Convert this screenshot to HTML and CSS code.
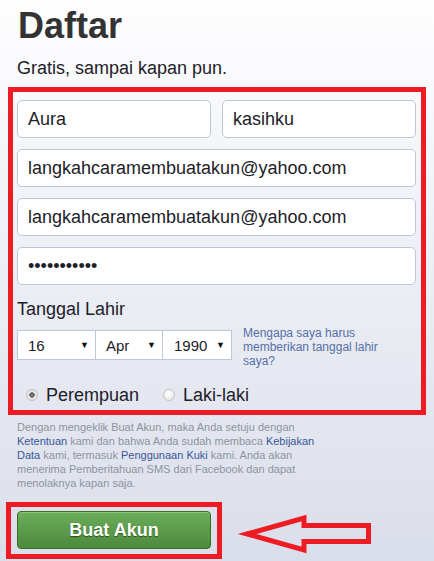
FILE: index.html
```html
<!DOCTYPE html>
<html lang="id">
<head>
    <meta charset="UTF-8">
    <meta name="viewport" content="width=device-width, initial-scale=1.0">
    <title>Daftar</title>
    <link rel="stylesheet" href="styles.css">
</head>
<body>
    <div class="page">
        <h1 class="title">Daftar</h1>
        <div class="subtitle">Gratis, sampai kapan pun.</div>

        <!-- Signup form -->
        <form class="form-box" id="signup-form">
            <div class="name-row">
                <input type="text" class="field" value="Aura">
                <input type="text" class="field" value="kasihku">
            </div>
            <input type="text" class="field" value="langkahcaramembuatakun@yahoo.com">
            <input type="text" class="field" value="langkahcaramembuatakun@yahoo.com">
            <input type="password" class="field" value="rahasia1234">

            <div class="birth-label">Tanggal Lahir</div>
            <div class="birth-row">
                <div class="select day"><span>16</span><span class="caret">&#9660;</span></div>
                <div class="select month"><span>Apr</span><span class="caret">&#9660;</span></div>
                <div class="select year"><span>1990</span><span class="caret">&#9660;</span></div>
                <a href="#" class="why-link">Mengapa saya harus memberikan tanggal lahir saya?</a>
            </div>

            <div class="gender-row">
                <label class="gender"><span class="radio checked"></span>Perempuan</label>
                <label class="gender"><span class="radio"></span>Laki-laki</label>
            </div>
        </form>

        <p class="terms">
            Dengan mengeklik Buat Akun, maka Anda setuju dengan<br>
            <a href="#">Ketentuan</a> kami dan bahwa Anda sudah membaca <a href="#">Kebijakan</a><br>
            <a href="#">Data</a> kami, termasuk <a href="#">Penggunaan Kuki</a> kami. Anda akan<br>
            menerima Pemberitahuan SMS dari Facebook dan dapat<br>
            menolaknya kapan saja.
        </p>

        <div class="signup-row">
            <div class="button-box">
                <button type="button" class="signup-btn">Buat Akun</button>
            </div>
            <svg class="arrow" width="142" height="48" viewBox="0 0 142 48">
                <polygon points="13,24 70,8 70,15.5 134.5,15.5 134.5,31.5 70,31.5 70,40"
                         fill="none" stroke="#ed1c24" stroke-width="5"/>
            </svg>
        </div>
    </div>
</body>
</html>
```

FILE: styles.css
```css
body {
    margin: 0;
    min-height: 561px;
    font-family: "Liberation Sans", Arial, sans-serif;
    background: linear-gradient(to bottom, #fefeff 0%, #dadeea 100%);
    color: #1d2129;
}
.page {
    padding: 0 8px;
}
.title {
    margin: 0;
    padding: 5px 0 0 10px;
    font-size: 36px;
    line-height: 42px;
    font-weight: bold;
    color: #333;
}
.subtitle {
    margin-top: 10px;
    padding-left: 9px;
    font-size: 18px;
    line-height: 22px;
}
.form-box {
    margin: 8px 0 0;
    border: 5px solid #ed1c24;
    padding: 8px 5px 4px 4px;
}
.name-row {
    display: flex;
    gap: 11px;
}
.field {
    display: block;
    box-sizing: border-box;
    width: 100%;
    height: 38px;
    margin: 0 0 11px;
    padding: 0 10px;
    border: 1px solid #bdc7d8;
    border-radius: 5px;
    background-color: #fff;
    font-family: "Liberation Sans", Arial, sans-serif;
    font-size: 18px;
    color: #1d2129;
}
.name-row .field {
    flex: 1;
}
.form-box > .field:last-of-type {
    margin-bottom: 0;
}
.birth-label {
    margin-top: 13px;
    font-size: 18px;
    line-height: 22px;
}
.birth-row {
    display: flex;
    align-items: flex-start;
    margin-top: 10px;
}
.select {
    box-sizing: border-box;
    display: flex;
    align-items: center;
    justify-content: space-between;
    height: 30px;
    padding: 0 6px 0 10px;
    border: 1px solid #bdc7d8;
    background-color: #fff;
    font-size: 15px;
    color: #1d2129;
}
.select + .select {
    border-left: none;
}
.day { width: 79px; }
.month { width: 67px; }
.year { width: 69px; padding-left: 11px; }
.caret {
    font-size: 9px;
    color: #111;
}
.why-link {
    width: 140px;
    margin: -4px 0 0 11px;
    font-size: 12px;
    line-height: 14px;
    color: #5470a8;
    text-decoration: none;
}
.gender-row {
    display: flex;
    margin-top: 16px;
    padding-left: 9px;
}
.gender {
    display: flex;
    align-items: center;
    font-size: 18px;
    line-height: 22px;
    margin-right: 24px;
}
.radio {
    box-sizing: border-box;
    width: 12px;
    height: 12px;
    margin-right: 8px;
    border: 1px solid #c3c3c3;
    border-radius: 50%;
    background: radial-gradient(circle at 40% 35%, #fff 0%, #e4e4e4 100%);
}
.radio.checked {
    background: radial-gradient(circle, #6d6d6d 0 2.5px, #ececec 3px, #d6d6d6 100%);
}
.terms {
    margin: 5px 0 0;
    padding-left: 9px;
    font-size: 11px;
    line-height: 14px;
    color: #8d949e;
}
.terms a {
    color: #385898;
    text-decoration: none;
}
.signup-row {
    display: flex;
    margin: 12px 0 0 -2px;
}
.button-box {
    border: 5px solid #ed1c24;
    padding: 4px 6px 5px 6px;
}
.signup-btn {
    display: block;
    width: 194px;
    height: 38px;
    border: 1px solid #3b6e22;
    border-radius: 4px;
    background: linear-gradient(to bottom, #6bae5c 0%, #4c8a3b 100%);
    box-shadow: inset 0 1px 0 #8cc47c;
    font-family: "Liberation Sans", Arial, sans-serif;
    font-size: 18px;
    font-weight: bold;
    color: #fff;
    text-shadow: 0 1px 1px #2a4f17;
    cursor: pointer;
}
.arrow {
    display: block;
    margin: 8px 0 0 12px;
}
```
